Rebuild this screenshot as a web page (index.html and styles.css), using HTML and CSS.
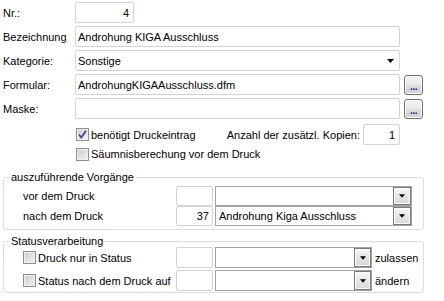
FILE: index.html
```html
<!DOCTYPE html>
<html lang="de">
<head>
    <meta charset="UTF-8">
    <title>Formular</title>
    <link rel="stylesheet" href="styles.css">
</head>
<body>
<div class="form">
    <div class="row first">
        <span class="lbl">Nr.:</span>
        <div class="field nr">4</div>
    </div>
    <div class="row">
        <span class="lbl">Bezeichnung</span>
        <div class="field wide">Androhung KIGA Ausschluss</div>
    </div>
    <div class="row">
        <span class="lbl">Kategorie:</span>
        <div class="field wide combo-flat">
            <span>Sonstige</span>
            <svg class="tri-big" width="7" height="4" viewBox="0 0 7 4"><path d="M0 0h7L3.5 4z" fill="#000"/></svg>
        </div>
    </div>
    <div class="row">
        <span class="lbl">Formular:</span>
        <div class="field wide">AndrohungKIGAAusschluss.dfm</div>
        <div class="dots">...</div>
    </div>
    <div class="row">
        <span class="lbl">Maske:</span>
        <div class="field wide"></div>
        <div class="dots">...</div>
    </div>
    <div class="row check-row">
        <span class="check">
            <svg width="9" height="9" viewBox="0 0 9 9"><path d="M1 4.5l2.3 3L8 0.8" fill="none" stroke="#3c4f8c" stroke-width="1.8"/></svg>
        </span>
        <span class="ctext">benötigt Druckeintrag</span>
        <span class="kopien">Anzahl der zusätzl. Kopien:</span>
        <div class="field kop">1</div>
    </div>
    <div class="row check-row second">
        <span class="check"></span>
        <span class="ctext">Säumnisberechung vor dem Druck</span>
    </div>

    <!-- Vorgaenge -->
    <fieldset class="group">
        <legend>auszuführende Vorgänge</legend>
        <div class="grow">
            <span class="glbl">vor dem Druck</span>
            <div class="field small"></div>
            <div class="combo">
                <span class="ctxt"></span>
                <span class="cbtn"><svg width="7" height="4" viewBox="0 0 7 4"><path d="M0 0h7L3.5 4z" fill="#000"/></svg></span>
            </div>
        </div>
        <div class="grow">
            <span class="glbl">nach dem Druck</span>
            <div class="field small num">37</div>
            <div class="combo">
                <span class="ctxt">Androhung Kiga Ausschluss</span>
                <span class="cbtn"><svg width="7" height="4" viewBox="0 0 7 4"><path d="M0 0h7L3.5 4z" fill="#000"/></svg></span>
            </div>
        </div>
    </fieldset>

    <!-- Status -->
    <fieldset class="group status">
        <legend>Statusverarbeitung</legend>
        <div class="grow tall">
            <span class="glbl"><span class="check"></span><span class="ctext">Druck nur in Status</span></span>
            <div class="field small"></div>
            <div class="combo short">
                <span class="ctxt"></span>
                <span class="cbtn"><svg width="7" height="4" viewBox="0 0 7 4"><path d="M0 0h7L3.5 4z" fill="#000"/></svg></span>
            </div>
            <span class="after">zulassen</span>
        </div>
        <div class="grow tall next">
            <span class="glbl"><span class="check"></span><span class="ctext">Status nach dem Druck auf</span></span>
            <div class="field small"></div>
            <div class="combo short">
                <span class="ctxt"></span>
                <span class="cbtn"><svg width="7" height="4" viewBox="0 0 7 4"><path d="M0 0h7L3.5 4z" fill="#000"/></svg></span>
            </div>
            <span class="after">ändern</span>
        </div>
    </fieldset>
</div>
</body>
</html>
```

FILE: styles.css
```css
body { margin: 0; font-family: "Liberation Sans", Arial, sans-serif; font-size: 11px; color: #000; background: #fff; }
.form { width: 444px; height: 301px; overflow: hidden; }

.row { display: flex; align-items: center; height: 21px; margin-top: 3px; }
.row.first { margin-top: 2px; }
.lbl { width: 75px; padding-left: 3px; box-sizing: border-box; white-space: nowrap; }

.field { box-sizing: border-box; height: 21px; border: 1px solid #d3d3d3; border-radius: 2px; background: #fff; padding: 0 2px; display: flex; align-items: center; white-space: nowrap; overflow: hidden; }
.field.wide { width: 325px; }
.field.nr { width: 59px; justify-content: flex-end; padding-right: 4px; }
.field.kop { width: 37px; justify-content: flex-end; padding-right: 4px; }
.combo-flat { justify-content: space-between; }
.tri-big { margin-right: 3px; }

.dots { box-sizing: border-box; width: 19px; height: 20px; margin-left: 4px; border: 1px solid #707070; border-radius: 3px; background: linear-gradient(#f3f3f3, #ebebeb 45%, #dddddd 55%, #cfcfcf); box-shadow: inset 0 0 0 1px #fcfcfc; color: #23239a; font-weight: bold; font-size: 10px; display: flex; align-items: flex-end; justify-content: center; padding-bottom: 3px; line-height: 8px; letter-spacing: -0.5px; }

.check-row { width: 400px; box-sizing: border-box; padding-left: 76px; margin-top: 5px; }
.check-row.second { height: 18px; margin-top: 0; }
.check { box-sizing: border-box; width: 13px; height: 13px; flex: none; border: 1px solid #8e8f8f; background: linear-gradient(135deg, #c9ccd1, #f2f2f2); box-shadow: inset 0 0 0 1px #f0f0f0; display: flex; align-items: center; justify-content: center; }
.ctext { margin-left: 2px; white-space: nowrap; }
.kopien { margin-left: auto; margin-right: 3px; white-space: nowrap; }

.group { margin: 8px 0 0 3px; width: 421px; min-width: 0; box-sizing: border-box; border: 1px solid #d5dfe5; border-radius: 3px; padding: 3px 0 3px 0; }
.group legend { margin-left: 6px; padding: 0 1px; line-height: 12px; }
.group.status { margin-top: 5px; padding: 0 0 1px 0; }

.grow { display: flex; align-items: center; height: 20px; }
.grow.tall { height: 21px; }
.grow.next { margin-top: 2px; }
.glbl { width: 172px; padding-left: 19px; box-sizing: border-box; display: flex; align-items: center; white-space: nowrap; }
.field.small { width: 37px; height: 100%; }
.field.num { justify-content: flex-end; padding-right: 3px; }

.combo { box-sizing: border-box; margin-left: 2px; width: 197px; height: 100%; border: 1px solid #a3a3a3; background: #fff; display: flex; }
.combo.short { width: 157px; }
.ctxt { flex: 1; padding-left: 3px; display: flex; align-items: center; white-space: nowrap; overflow: hidden; }
.cbtn { box-sizing: border-box; width: 18px; border: 1px solid #7b7b7b; background: linear-gradient(#f7f7f7, #e6e6e6 50%, #d7d7d7); box-shadow: inset 0 0 0 1px #fdfdfd; display: flex; align-items: center; justify-content: center; }
.combo.short .cbtn { width: 17px; }
.cbtn svg { width: 6px; height: 4px; }
.after { margin-left: 3px; white-space: nowrap; }
```
